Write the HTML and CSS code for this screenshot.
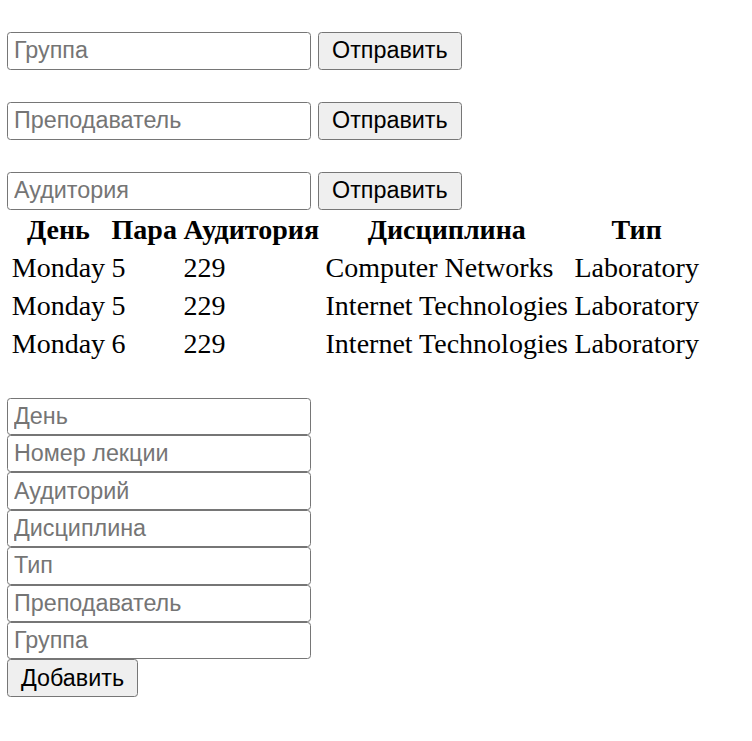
FILE: index.html
```html
<!DOCTYPE html>
<html lang="ru">
<head>
<meta charset="utf-8">
<title>Расписание</title>
<link rel="stylesheet" href="styles.css">
</head>
<body>
<form class="search">
  <input class="field" type="text" placeholder="Группа">
  <button class="btn" type="button">Отправить</button>
</form>
<form class="search">
  <input class="field" type="text" placeholder="Преподаватель">
  <button class="btn" type="button">Отправить</button>
</form>
<form class="search last">
  <input class="field" type="text" placeholder="Аудитория">
  <button class="btn" type="button">Отправить</button>
</form>
<table class="schedule">
  <thead>
    <tr><th>День</th><th>Пара</th><th>Аудитория</th><th>Дисциплина</th><th>Тип</th></tr>
  </thead>
  <tbody>
    <tr><td>Monday</td><td>5</td><td>229</td><td>Computer Networks</td><td>Laboratory</td></tr>
    <tr><td>Monday</td><td>5</td><td>229</td><td>Internet Technologies</td><td>Laboratory</td></tr>
    <tr><td>Monday</td><td>6</td><td>229</td><td>Internet Technologies</td><td>Laboratory</td></tr>
  </tbody>
</table>
<form class="add">
  <input class="field" type="text" placeholder="День">
  <input class="field" type="text" placeholder="Номер лекции">
  <input class="field" type="text" placeholder="Аудиторий">
  <input class="field" type="text" placeholder="Дисциплина">
  <input class="field" type="text" placeholder="Тип">
  <input class="field" type="text" placeholder="Преподаватель">
  <input class="field" type="text" placeholder="Группа">
  <button class="btn add-btn" type="button">Добавить</button>
</form>
</body>
</html>
```
FILE: styles.css
```css
html, body {
  background: #ffffff;
}
body {
  margin: 0;
  padding: 32px 7px 0 7px;
  font-family: "Liberation Serif", "Times New Roman", serif;
  font-size: 28px;
  color: #000;
}
.search {
  display: flex;
  align-items: flex-start;
  gap: 7px;
  margin: 0 0 32.5px 0;
}
.search.last {
  margin-bottom: 0;
}
.field {
  box-sizing: border-box;
  width: 304px;
  height: 37.5px;
  margin: 0;
  padding: 1px 6px 1px 6px;
  border: 1px solid #767676;
  border-radius: 3.5px;
  background: #fff;
  font-family: "Liberation Sans", Arial, sans-serif;
  font-size: 23.33px;
  color: #000;
  outline: none;
}
.field::placeholder {
  color: #757575;
  opacity: 1;
}
.btn {
  box-sizing: border-box;
  height: 37.5px;
  margin: 0;
  padding: 1.75px 13px;
  border: 1px solid #767676;
  border-radius: 3.5px;
  background: #efefef;
  font-family: "Liberation Sans", Arial, sans-serif;
  font-size: 23.33px;
  color: #000;
}
.schedule {
  border-collapse: separate;
  border-spacing: 3.5px;
  margin: 0;
  font-size: 28px;
}
.schedule th,
.schedule td {
  padding: 1.75px;
  line-height: 31.5px;
  white-space: nowrap;
}
.schedule th {
  font-weight: bold;
  text-align: center;
  padding-top: 1px;
  padding-bottom: 2.5px;
}
.schedule td {
  text-align: left;
}
.add {
  display: flex;
  flex-direction: column;
  align-items: flex-start;
  margin-top: 33px;
}
.add .field {
  height: 37.43px;
}
.add-btn {
  height: 38px;
}
```
